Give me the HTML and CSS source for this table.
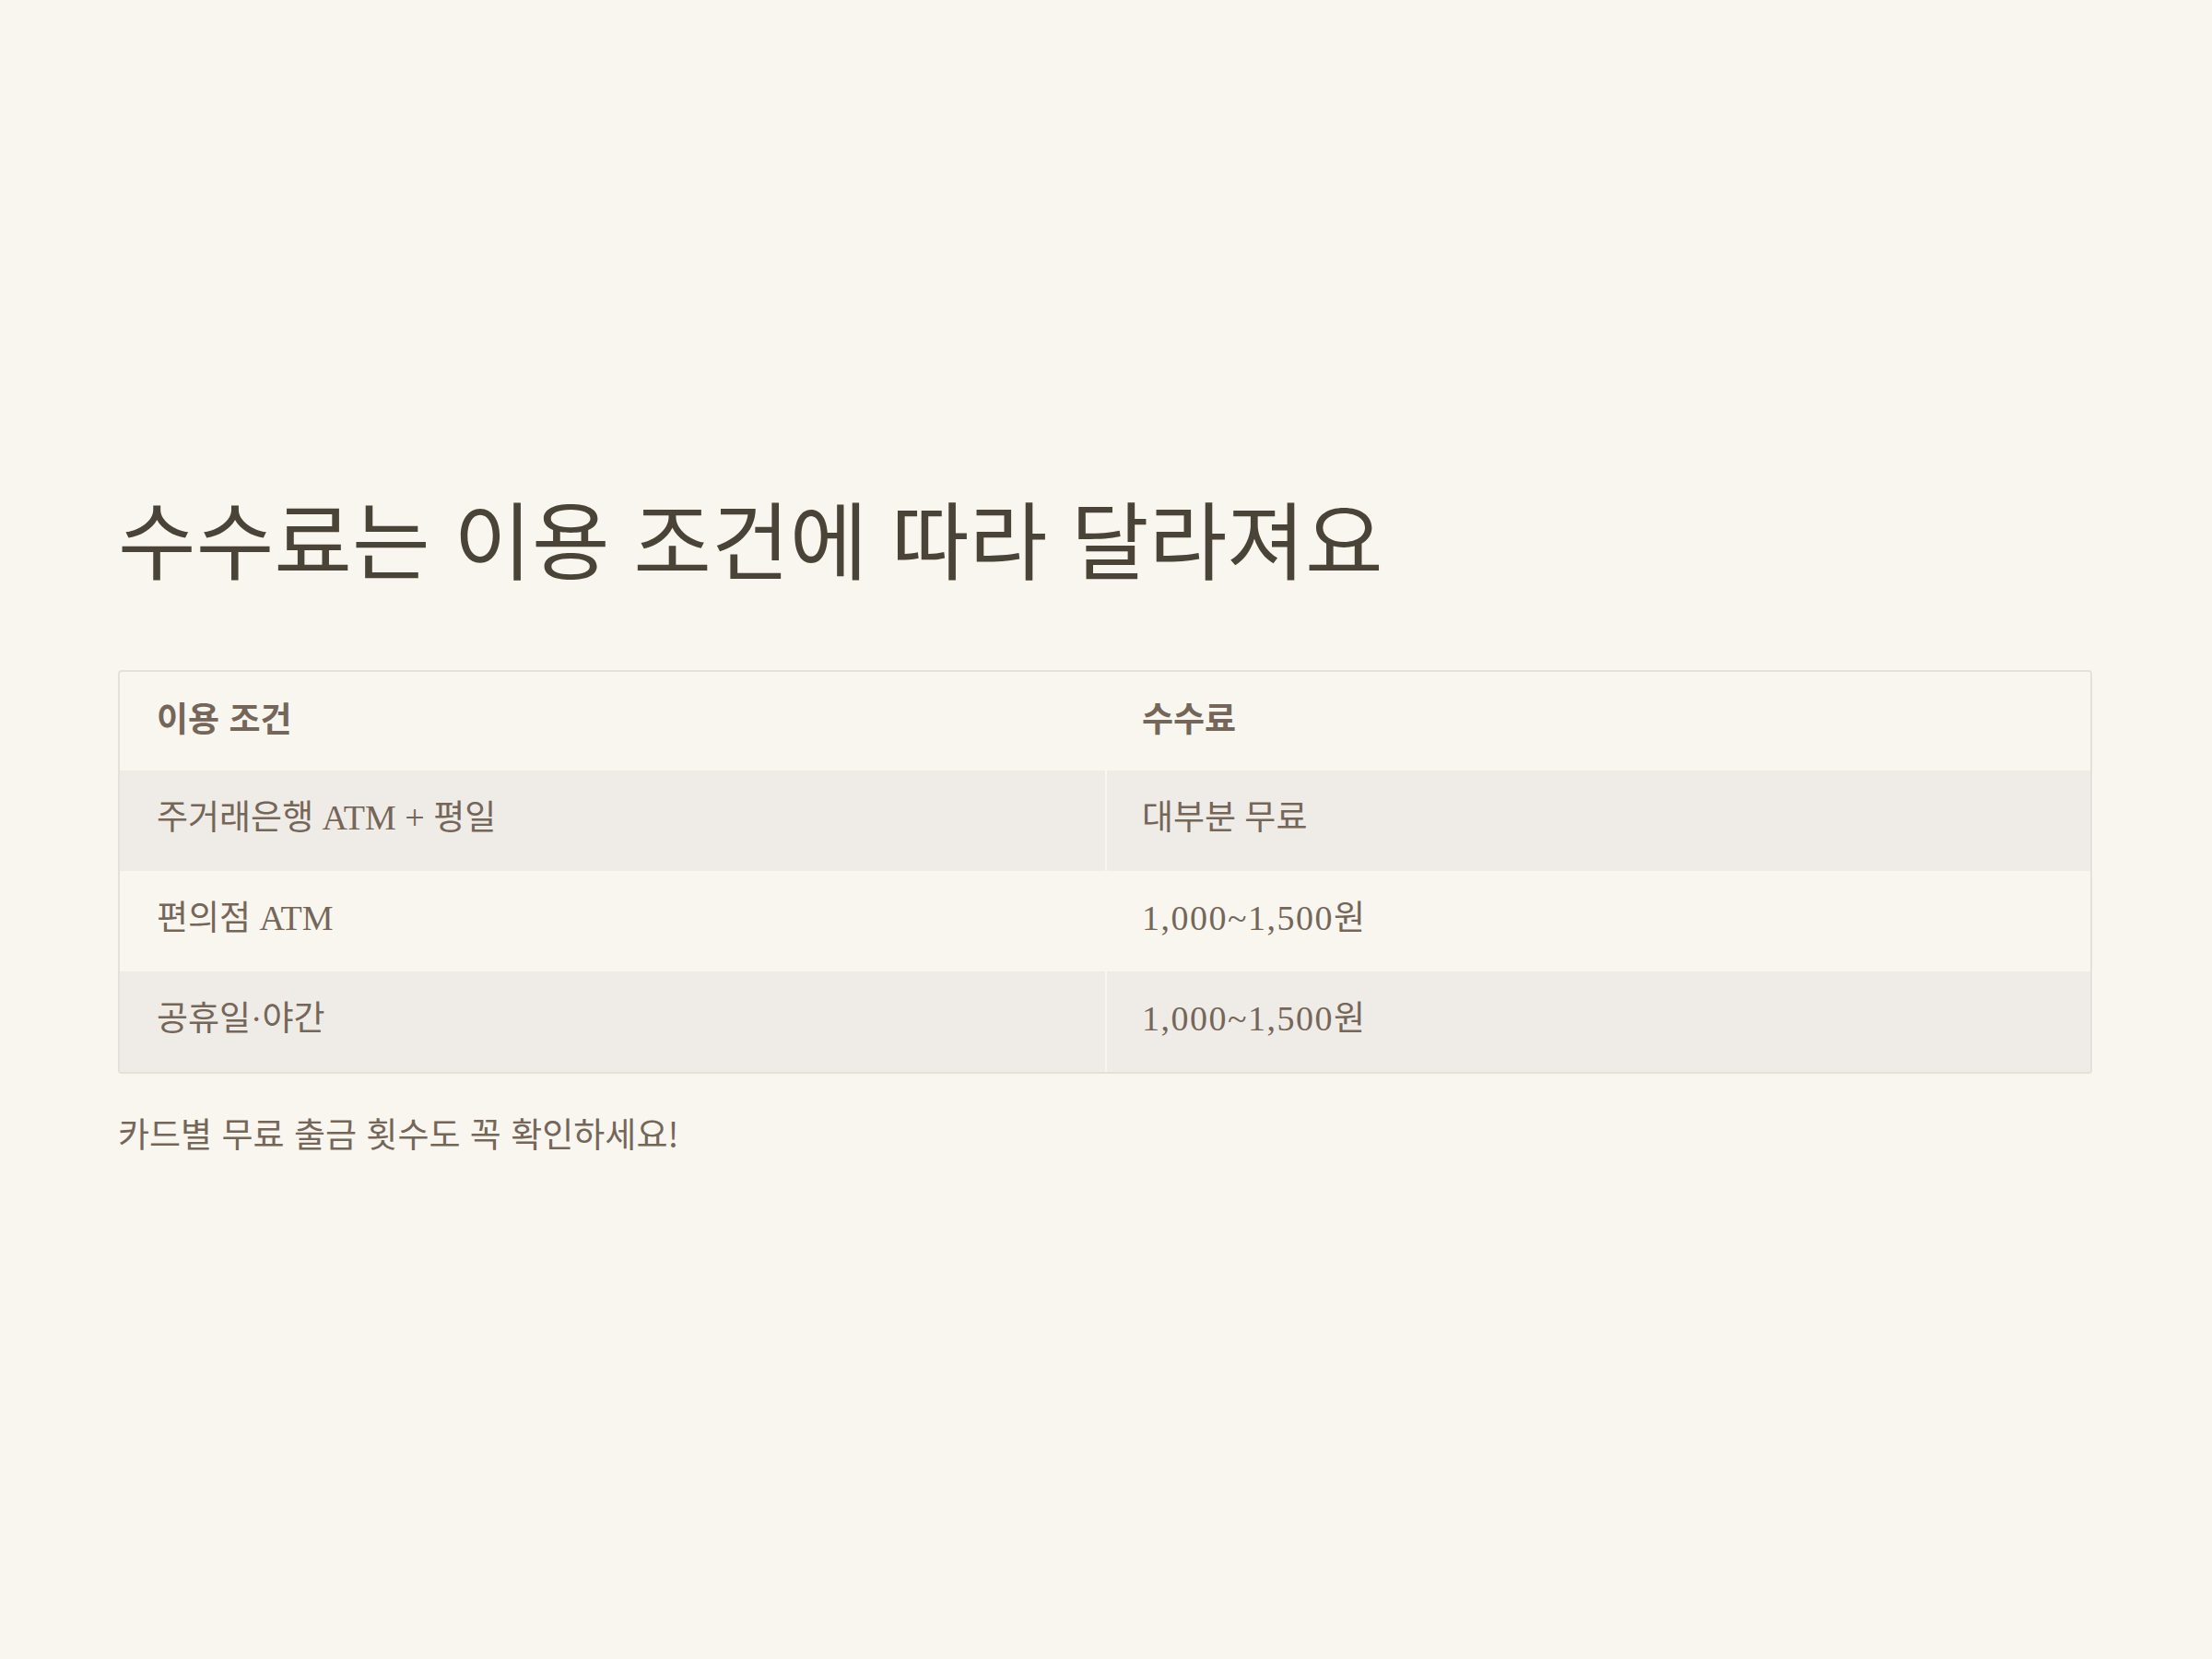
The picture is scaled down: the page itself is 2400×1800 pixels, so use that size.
FILE: index.html
```html
<!DOCTYPE html>
<html lang="ko">
<head>
<meta charset="utf-8">
<title>수수료</title>
<link rel="stylesheet" href="styles.css">
</head>
<body>
<main class="page">
  <h1 class="title">수수료는 이용 조건에 따라 달라져요</h1>
  <div class="table-wrap">
    <table class="fee-table">
      <thead>
        <tr><th>이용 조건</th><th>수수료</th></tr>
      </thead>
      <tbody>
        <tr class="shaded"><td>주거래은행 <span class="latin">ATM + </span>평일</td><td>대부분 무료</td></tr>
        <tr><td>편의점 <span class="latin">ATM</span></td><td><span class="amount">1,000~1,500</span>원</td></tr>
        <tr class="shaded"><td>공휴일·야간</td><td><span class="amount">1,000~1,500</span>원</td></tr>
      </tbody>
    </table>
  </div>
  <p class="note">카드별 무료 출금 횟수도 꼭 확인하세요!</p>
</main>
</body>
</html>
```

FILE: styles.css
```css
html, body {
  margin: 0;
  padding: 0;
  background: #f9f6f0;
}
body {
  font-family: "Liberation Serif", "Noto Sans CJK KR", serif;
  color: #75665a;
}
.page {
  min-height: 100vh;
  box-sizing: border-box;
  padding: 0 130px 16px 128px;
  display: flex;
  flex-direction: column;
  justify-content: center;
}
.title {
  margin: 0 0 92px 0;
  font-family: "Noto Sans CJK KR", sans-serif;
  font-weight: 400;
  font-size: 92px;
  line-height: 106px;
  color: #4a4337;
}
.table-wrap {
  border: 2px solid #e5e1da;
  border-radius: 4px;
  overflow: hidden;
}
.fee-table {
  width: 100%;
  border-collapse: separate;
  border-spacing: 0;
  table-layout: fixed;
  font-size: 37px;
}
.fee-table th,
.fee-table td {
  text-align: left;
  padding: 24px 40px 30px 40px;
  line-height: 54px;
  vertical-align: middle;
}
.fee-table th {
  padding-top: 22px;
  padding-bottom: 31px;
  font-family: "Noto Sans CJK KR", sans-serif;
  font-weight: 700;
  font-size: 37px;
  color: #75665a;
}
.fee-table th + th,
.fee-table td + td {
  border-left: 2px solid #f9f6f0;
  padding-left: 38px;
}
.fee-table tr.shaded td {
  background: #efece7;
}
.latin {
  font-size: 38px;
}
.amount {
  font-size: 38px;
  letter-spacing: 1.5px;
}
.note {
  margin: 38px 0 0 0;
  font-family: "Noto Sans CJK KR", sans-serif;
  font-size: 37px;
  line-height: 52px;
  color: #75665a;
}
```
